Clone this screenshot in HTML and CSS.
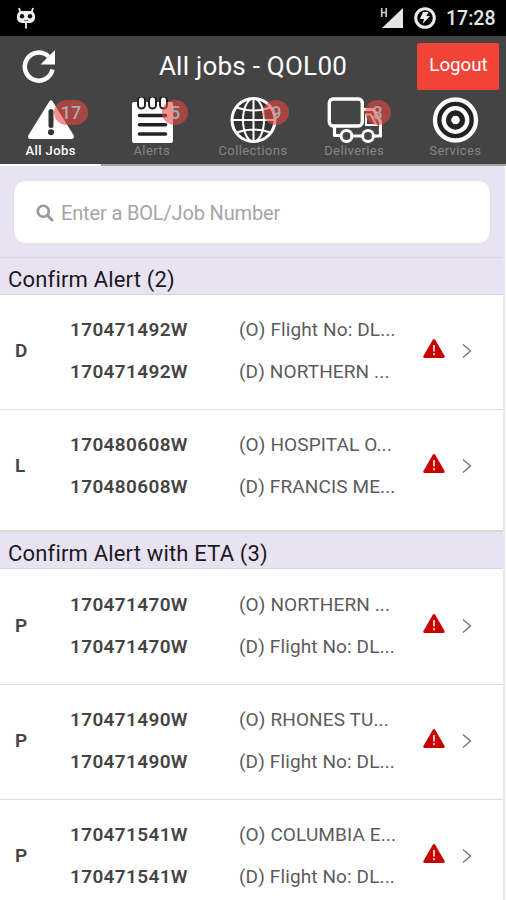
FILE: index.html
```html
<!DOCTYPE html>
<html lang="en">
<head>
    <meta charset="UTF-8">
    <meta name="viewport" content="width=device-width, initial-scale=1.0">
    <title>All jobs</title>
    <link rel="stylesheet" href="styles.css">
</head>
<body>
    <!-- Shared icons -->
    <svg class="icon-defs">
        <symbol id="warning" viewBox="0 0 22 19">
            <path d="M9.8 .8q1.2-1.4 2.4 0L21.6 17q.6 2-1.4 2H1.8Q-.2 19 .4 17z" fill="#c80000"/>
            <path d="M11 6v6.500M11 14v2.300" stroke="#fff" stroke-width="1.500"/>
        </symbol>
        <symbol id="chevron" viewBox="0 0 10 16">
            <path d="M1 1.500L8.500 8 1 14.500" fill="none" stroke="#777" stroke-width="1.400"/>
        </symbol>
    </svg>

    <div class="status-bar">
        <svg class="cyanogen" width="20" height="23" viewBox="0 0 20 23">
            <path d="M4.500 6L3 1M15.500 6L17 1M10 15v6.500" stroke="#eee" stroke-width="1.800"/>
            <rect x="1" y="4" width="18" height="12" rx="5" fill="#eee"/>
            <circle cx="6" cy="9.300" r="2.200" fill="#111"/>
            <circle cx="14" cy="9.300" r="2.200" fill="#111"/>
            <path d="M8 13.500h4" stroke="#777"/>
        </svg>
        <div class="status-right">
            <svg class="signal" width="24" height="22" viewBox="0 0 24 22">
                <path d="M23 1v20H2z" fill="#e6e6e6"/>
                <path d="M1.700 1v9M6.200 1v9M1.700 5.500h4.500" stroke="#ccc" stroke-width="1.600"/>
            </svg>
            <svg class="battery" width="22" height="22" viewBox="0 0 22 22">
                <circle cx="11" cy="11" r="9.300" fill="none" stroke="#eee" stroke-width="3"/>
                <path d="M9 5h5.500l-2 4H16l-7.500 8 1.500-5H6z" fill="#eee"/>
            </svg>
            <span class="clock">17:28</span>
        </div>
    </div>

    <header class="header">
        <div class="title-bar">
            <svg class="refresh" width="34" height="34" viewBox="0 0 34 34">
                <path d="M30.500 20.500A14 14 0 1 1 26.500 7.500" fill="none" stroke="#fff" stroke-width="4.500"/>
                <path d="M33 1v14.500H18.500z" fill="#fff"/>
            </svg>
            <h1>All jobs - QOL00</h1>
            <button class="logout">Logout</button>
        </div>
        <nav class="tabs">
            <a class="tab active">
                <svg width="48" height="46" viewBox="0 0 48 46">
                    <path d="M22.300 4.500q1.700-2.600 3.400 0L46.500 38q1.500 4-2.500 4H4q-4 0-2.500-4z" fill="#fff"/>
                    <path d="M24 14.500v14" stroke="#333" stroke-width="5" stroke-linecap="round"/>
                    <circle cx="24" cy="35.300" r="3" fill="#333"/>
                </svg>
                <span class="badge wide">17</span>
                <span class="label">All Jobs</span>
            </a>
            <a class="tab">
                <svg width="48" height="46" viewBox="0 0 48 46">
                    <rect x="4" y="5" width="41" height="41" rx="2" fill="#fff"/>
                    <g fill="#fff" stroke="#222" stroke-width="2">
                        <rect x="10" y="-.5" width="7" height="12" rx="3.500"/>
                        <rect x="21" y="-.5" width="7" height="12" rx="3.500"/>
                        <rect x="32" y="-.5" width="7" height="12" rx="3.500"/>
                    </g>
                    <path d="M11.500 18.500h26M11.500 27.700h26M11.500 37h26" stroke="#222" stroke-width="3.600" stroke-linecap="round"/>
                </svg>
                <span class="badge">5</span>
                <span class="label">Alerts</span>
            </a>
            <a class="tab">
                <svg width="48" height="46" viewBox="0 0 48 46">
                    <circle cx="24.500" cy="23" r="21.500" fill="#333" stroke="#fff" stroke-width="3"/>
                    <path d="M24.500 1v44M3 23h43M7.500 10.500q17 6 34 0M7.500 35.500q17-6 34 0" fill="none" stroke="#fff" stroke-width="2"/>
                    <ellipse cx="24.500" cy="23" rx="10.500" ry="21.500" fill="none" stroke="#fff" stroke-width="2"/>
                </svg>
                <span class="badge">9</span>
                <span class="label">Collections</span>
            </a>
            <a class="tab">
                <svg width="56" height="46" viewBox="0 0 56 46">
                    <rect x="3.300" y="2" width="33" height="27" rx="4" fill="none" stroke="#fff" stroke-width="3.400"/>
                    <path d="M8.500 30v8.500h6M26.500 39h9.500M48 39h6.500V25l-7-12.500H37.500" fill="none" stroke="#fff" stroke-width="3.200" stroke-linejoin="round"/>
                    <path d="M40 28V17.500h4.500l6 10.500z" fill="none" stroke="#fff" stroke-width="2"/>
                    <circle cx="20.500" cy="39" r="5.400" fill="none" stroke="#fff" stroke-width="3"/>
                    <circle cx="42" cy="39" r="5.400" fill="none" stroke="#fff" stroke-width="3"/>
                </svg>
                <span class="badge">3</span>
                <span class="label">Deliveries</span>
            </a>
            <a class="tab">
                <svg width="48" height="46" viewBox="0 0 48 46">
                    <circle cx="24.500" cy="23" r="22.500" fill="#222"/>
                    <circle cx="24.500" cy="23" r="20.500" fill="none" stroke="#fff" stroke-width="4.300"/>
                    <circle cx="24.500" cy="23" r="11.800" fill="none" stroke="#fff" stroke-width="4.300"/>
                    <circle cx="24.500" cy="23" r="4.300" fill="#fff"/>
                </svg>
                <span class="label">Services</span>
            </a>
        </nav>
    </header>

    <main class="content">
        <div class="search">
            <div class="search-box">
                <svg width="18" height="18" viewBox="0 0 18 18">
                    <circle cx="7.300" cy="7.300" r="5.500" fill="none" stroke="#999" stroke-width="2.600"/>
                    <path d="M11.500 11.500l4.500 4.500" stroke="#999" stroke-width="3" stroke-linecap="round"/>
                </svg>
                <span>Enter a BOL/Job Number</span>
            </div>
        </div>

        <h2 class="divider">Confirm Alert (2)</h2>
        <div class="job">
            <span class="type">D</span>
            <div class="numbers"><p>170471492W</p><p>170471492W</p></div>
            <div class="places"><p>(O) Flight No: DL...</p><p>(D) NORTHERN ...</p></div>
            <svg class="warning"><use href="#warning"/></svg>
            <svg class="chevron"><use href="#chevron"/></svg>
        </div>
        <div class="job last">
            <span class="type">L</span>
            <div class="numbers"><p>170480608W</p><p>170480608W</p></div>
            <div class="places"><p>(O) HOSPITAL O...</p><p>(D) FRANCIS ME...</p></div>
            <svg class="warning"><use href="#warning"/></svg>
            <svg class="chevron"><use href="#chevron"/></svg>
        </div>

        <h2 class="divider">Confirm Alert with ETA (3)</h2>
        <div class="job">
            <span class="type">P</span>
            <div class="numbers"><p>170471470W</p><p>170471470W</p></div>
            <div class="places"><p>(O) NORTHERN ...</p><p>(D) Flight No: DL...</p></div>
            <svg class="warning"><use href="#warning"/></svg>
            <svg class="chevron"><use href="#chevron"/></svg>
        </div>
        <div class="job">
            <span class="type">P</span>
            <div class="numbers"><p>170471490W</p><p>170471490W</p></div>
            <div class="places"><p>(O) RHONES TU...</p><p>(D) Flight No: DL...</p></div>
            <svg class="warning"><use href="#warning"/></svg>
            <svg class="chevron"><use href="#chevron"/></svg>
        </div>
        <div class="job">
            <span class="type">P</span>
            <div class="numbers"><p>170471541W</p><p>170471541W</p></div>
            <div class="places"><p>(O) COLUMBIA E...</p><p>(D) Flight No: DL...</p></div>
            <svg class="warning"><use href="#warning"/></svg>
            <svg class="chevron"><use href="#chevron"/></svg>
        </div>
    </main>
</body>
</html>
```
FILE: styles.css
```css
* {
    margin: 0;
    padding: 0;
    box-sizing: border-box;
}

body {
    height: 900px;
    overflow: hidden;
    background-color: #fff;
    font-family: Roboto, "Liberation Sans", sans-serif;
}

svg {
    display: block;
    flex-shrink: 0;
}

.icon-defs {
    display: none;
}

/* Status bar */
.status-bar {
    display: flex;
    justify-content: space-between;
    align-items: center;
    height: 36px;
    padding: 0 10px 0 16px;
    background-color: #000;
}

.status-right {
    display: flex;
    align-items: center;
}

.signal {
    margin-right: 10px;
}

.battery {
    margin-right: 10px;
}

.clock {
    width: 50px;
    padding-top: 1px;
    color: #e6e6e6;
    font-size: 19.5px;
    font-weight: 500;
    white-space: nowrap;
}

/* Header */
.header {
    height: 130px;
    background-color: #444;
}

.title-bar {
    display: grid;
    grid-template-columns: 90px 1fr 90px;
    align-items: center;
    height: 60px;
}

.refresh {
    margin-left: 22px;
}

h1 {
    color: #fff;
    font-size: 26px;
    font-weight: 400;
    letter-spacing: 0.25px;
    line-height: 30px;
    text-align: center;
    white-space: nowrap;
}

.logout {
    width: 82px;
    height: 47px;
    margin-left: 1px;
    padding: 0 0 3px 1px;
    border: none;
    border-radius: 2px;
    background-color: #f04438;
    color: #fff;
    font-family: inherit;
    font-size: 18.7px;
}

.tabs {
    display: grid;
    grid-template-columns: repeat(5, 1fr);
    height: 70px;
}

.tab {
    position: relative;
    display: flex;
    flex-direction: column;
    align-items: center;
    padding-top: 1px;
    border-bottom: 2px solid #a5a2a5;
    color: #858585;
    font-size: 13px;
}

.tab.active {
    border-bottom-color: #fff;
    color: #fff;
    font-weight: 500;
}

.label {
    line-height: 16px;
    letter-spacing: 0.4px;
}

.badge {
    position: absolute;
    top: 4px;
    left: 61px;
    width: 26px;
    height: 25px;
    border-radius: 13px;
    background-color: rgba(233, 70, 65, 0.6);
    color: #aaa;
    font-size: 18px;
    font-weight: 500;
    line-height: 25px;
    text-align: center;
}

.badge.wide {
    left: 54px;
    width: 34px;
}

/* List */
.content {
    width: 505px;
    height: 734px;
    overflow: hidden;
    border-right: 2px solid #e8e8e8;
}

.search {
    height: 91px;
    padding: 14px 12px 13px 13px;
    background-color: #e8e3f2;
}

.search-box {
    display: flex;
    align-items: center;
    gap: 7px;
    height: 64px;
    padding: 1px 0 0 22px;
    border: 1px solid #e2dfe8;
    border-radius: 12px;
    background-color: #fff;
    color: #a5a5a5;
    font-size: 20px;
    letter-spacing: -0.15px;
}

.divider {
    height: 38px;
    padding-left: 8px;
    border-top: 1px solid #dcd6e0;
    border-bottom: 1px solid #d8d5dc;
    background-color: #e8e3f2;
    color: #1c1822;
    font-size: 22px;
    font-weight: 400;
    letter-spacing: 0.18px;
    line-height: 43px;
}

.job {
    display: grid;
    grid-template-columns: 55px 169px 184px 39px 1fr;
    align-items: center;
    height: 115.4px;
    padding: 14px 0 16px 15px;
    border-bottom: 1px solid #ddd;
    color: #5c5c5c;
    font-size: 19px;
    line-height: 42px;
    white-space: nowrap;
}

.job.last {
    height: 121px;
    padding-bottom: 22px;
}

.type,
.numbers {
    color: #444;
    font-weight: 600;
}

.numbers {
    letter-spacing: 0.35px;
}

.places {
    letter-spacing: 0.12px;
}

.warning {
    width: 22px;
    height: 19px;
    margin-top: -5px;
}

.chevron {
    width: 10px;
    height: 16px;
}
```
